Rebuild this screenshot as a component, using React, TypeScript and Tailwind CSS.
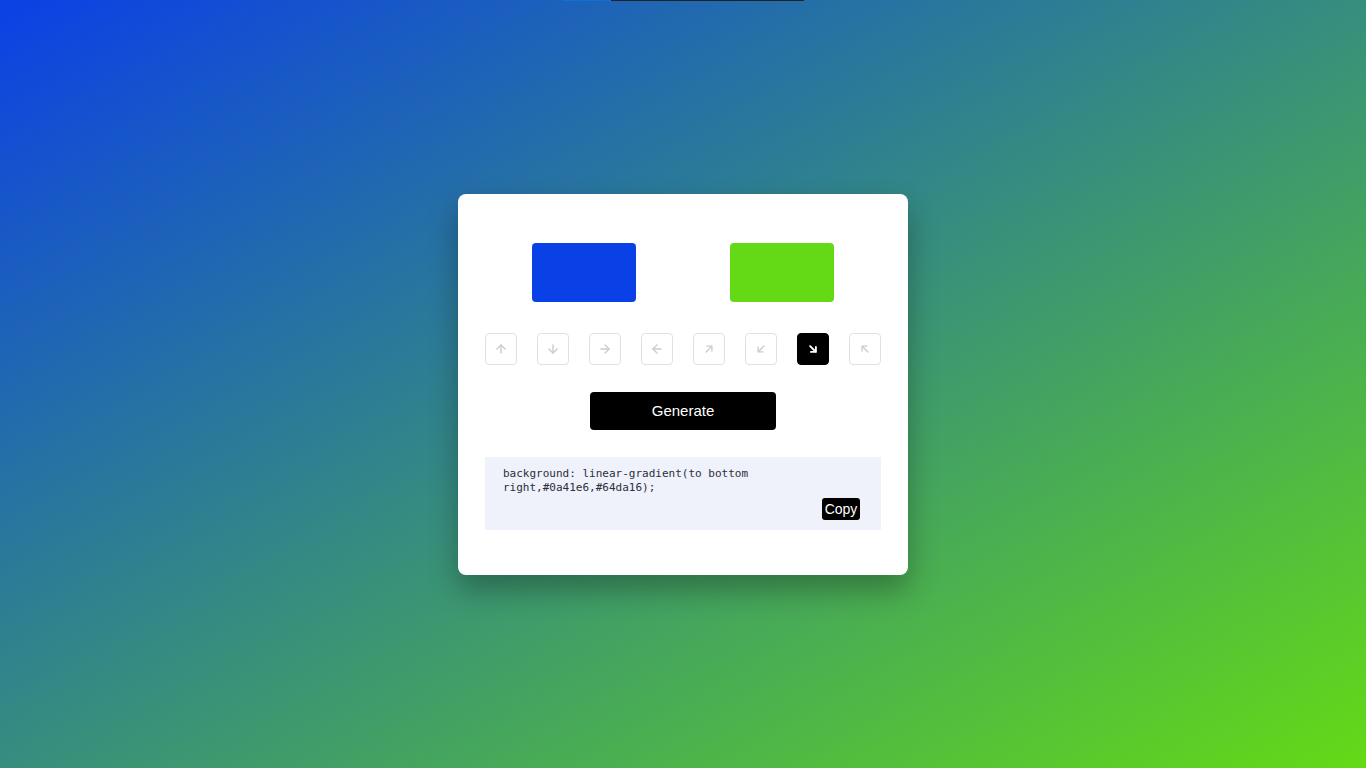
import React, { useState } from "react";

const Arrow = ({ dir, active }: { dir: string; active: boolean }) => {
  const rot: Record<string, number> = {
    top: 0,
    bottom: 180,
    right: 90,
    left: 270,
    "top right": 45,
    "bottom left": 225,
    "bottom right": 135,
    "top left": 315,
  };
  const diag = dir.includes(" ");
  return (
    <svg
      width="14"
      height="14"
      viewBox="0 0 24 24"
      fill="none"
      stroke={active ? "#ffffff" : "#c9ccd4"}
      strokeWidth={active ? 3.2 : 2.4}
      strokeLinecap="round"
      strokeLinejoin="round"
      style={{ transform: `rotate(${rot[dir]}deg)` }}
    >
      {diag ? (
        <g>
          <path d="M12 19V6" />
          <path d="M6 11l6-6 6 6" />
        </g>
      ) : (
        <g>
          <path d="M12 19V5" />
          <path d="M5 12l7-7 7 7" />
        </g>
      )}
    </svg>
  );
};

export default function App() {
  const dirs = ["top", "bottom", "right", "left", "top right", "bottom left", "bottom right", "top left"];
  const [sel, setSel] = useState("bottom right");
  return (
    <div
      className="relative h-screen w-full flex items-center justify-center"
      style={{ background: "linear-gradient(to bottom right,#0a41e6,#64da16)" }}
    >
      <div className="absolute top-0 left-[563px] flex h-[1px]">
        <div className="w-[48px] bg-[#0a74d4]" />
        <div className="w-[193px] bg-[#222222]" />
      </div>
      <div className="w-[450px] h-[381px] bg-white rounded-[8px] shadow-[0_15px_30px_rgba(0,0,0,0.3)] px-[27px] pt-[49px]">
        <div className="flex justify-center gap-[94px]">
          <div className="w-[104px] h-[59px] rounded-[4px] bg-[#0a41e6]" />
          <div className="w-[104px] h-[59px] rounded-[4px] bg-[#64da16]" />
        </div>
        <div className="mt-[31px] flex justify-between">
          {dirs.map((d) => (
            <button
              key={d}
              onClick={() => setSel(d)}
              className={`w-[32px] h-[32px] rounded-[4px] flex items-center justify-center ${
                sel === d ? "bg-black border border-black" : "bg-white border border-[#dfe1e6]"
              }`}
            >
              <Arrow dir={d} active={sel === d} />
            </button>
          ))}
        </div>
        <div className="mt-[27px] flex justify-center">
          <button className="w-[186px] h-[38px] pt-[2px] bg-black text-white rounded-[4px] text-[15px] font-['Liberation_Sans',Arial,sans-serif]">
            Generate
          </button>
        </div>
        <div className="mt-[27px] h-[73px] bg-[#eff2fb] pl-[18px] pr-[21px] pt-[10px] pb-[10px] flex justify-between items-end">
          <div className="self-start w-[300px] text-[11px] leading-[14px] text-[#2a2f3a] font-['DejaVu_Sans_Mono',monospace]">
            background: linear-gradient(to bottom right,#0a41e6,#64da16);
          </div>
          <button className="h-[22px] w-[38px] bg-black text-white rounded-[3px] text-[14px] leading-[22px] font-['Liberation_Sans',Arial,sans-serif]">
            Copy
          </button>
        </div>
      </div>
    </div>
  );
}
